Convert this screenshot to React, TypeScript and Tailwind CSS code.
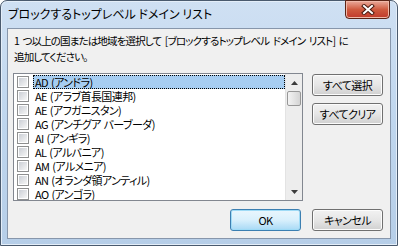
import React from 'react';

const items = [
	'AD (アンドラ)',
	'AE (アラブ首長国連邦)',
	'AE (アフガニスタン)',
	'AG (アンチグア バーブーダ)',
	'AI (アンギラ)',
	'AL (アルバニア)',
	'AM (アルメニア)',
	'AN (オランダ領アンティル)',
	'AO (アンゴラ)',
];

const font = "font-['Meiryo_UI','Noto_Sans_CJK_JP',sans-serif] [font-feature-settings:'palt']";

const Checkbox = () => (
	<div className="w-[12px] h-[12px] shrink-0 border border-[#8e8f8f] bg-white p-[1px]">
		<div className="w-full h-full bg-gradient-to-br from-[#cbcfd5] to-[#f6f6f6]" />
	</div>
);

const Button = ({ label, primary }: { label: string; primary?: boolean }) => (
	<button
		className={`w-[71px] h-[22px] rounded-[3px] border text-[11px] tracking-[-0.6px] text-black leading-none flex items-center justify-center ${
			primary
				? 'border-[#3c7fb1] bg-gradient-to-b from-[#eaf6fd] via-[#d9f0fc] to-[#a7d9f5] shadow-[inset_0_0_0_1px_#9fdbf6]'
				: 'border-[#707070] bg-gradient-to-b from-[#f2f2f2] via-[#e6e6e6] to-[#d0d0d0] shadow-[inset_0_0_0_1px_#fcfcfc]'
		}`}
	>
		{label}
	</button>
);

const App = () => {
	return (
		<div className={`w-[398px] h-[246px] bg-white overflow-hidden ${font}`}>
			<div className="w-full h-full flex flex-col rounded-t-[7px] border border-[#4a5a6e] bg-gradient-to-b from-[#cfe0f3] via-[#bfd6ee] to-[#b6cee8] px-[6px] pb-[6px] shadow-[inset_0_0_0_1px_#e4eef9]">
				<div className="h-[27px] flex items-start justify-between">
					<div className="pt-[5px] pl-[1px] text-[12px] leading-[16px] text-black whitespace-nowrap">
						ブロックするトップレベル ドメイン リスト
					</div>
					<div className="mt-[-1px] mr-[1px] w-[45px] h-[19px] rounded-b-[4px] border border-[#5c2416] bg-gradient-to-b from-[#e9a99a] via-[#cf5a3f] to-[#c0392b] flex items-center justify-center shadow-[inset_0_0_0_1px_#f0b8a8]">
						<svg width="14" height="11" viewBox="0 0 14 11">
							<path d="M3 2 L11 9 M11 2 L3 9" stroke="#4a1a10" strokeWidth="4" strokeLinecap="square" />
							<path d="M3 2 L11 9 M11 2 L3 9" stroke="#ffffff" strokeWidth="2" strokeLinecap="square" />
						</svg>
					</div>
				</div>
				<div className="flex-1 border border-[#8796ab] bg-[#f0f0f0] pl-[5px] pr-[7px] pt-[4px] pb-[7px] flex flex-col">
					<div className="pl-[1px] text-[10.5px] tracking-[-0.85px] [word-spacing:2px] leading-[16px] text-black whitespace-nowrap">
						<div>1 つ以上の国または地域を選択して [ブロックするトップレベル ドメイン リスト] に</div>
						<div>追加してください。</div>
					</div>
					<div className="mt-[8px] flex gap-[9px]">
						<div className="w-[290px] h-[128px] border border-[#828790] bg-white flex overflow-hidden">
							<div className="flex-1 pt-[1px] flex flex-col">
								{items.map((item, i) => (
									<div key={i} className="h-[14px] flex items-center pl-[3px] shrink-0">
										<Checkbox />
										<div
											className={`ml-[4px] flex-1 h-[14px] pl-[2px] text-[11px] tracking-[-0.6px] [word-spacing:1px] leading-[14px] text-black flex items-center whitespace-nowrap overflow-hidden ${
												i === 0 ? 'bg-[#a6cdf1] outline outline-1 outline-dotted outline-black -outline-offset-1' : ''
											}`}
										>
											{item}
										</div>
									</div>
								))}
							</div>
							<div className="w-[17px] h-full bg-[#ededed] border-l border-[#e3e3e3] flex flex-col items-center">
								<div className="h-[17px] flex items-center justify-center">
									<svg width="7" height="4" viewBox="0 0 7 4">
										<path d="M0 4 L3.5 0 L7 4 Z" fill="#3c3c3c" />
									</svg>
								</div>
								<div className="w-[14px] h-[15px] rounded-[2px] border border-[#979797] bg-gradient-to-r from-[#f3f3f3] via-[#e4e4e4] to-[#d4d4d4]" />
								<div className="flex-1" />
								<div className="h-[17px] flex items-center justify-center">
									<svg width="7" height="4" viewBox="0 0 7 4">
										<path d="M0 0 L7 0 L3.5 4 Z" fill="#3c3c3c" />
									</svg>
								</div>
							</div>
						</div>
						<div className="flex flex-col gap-[7px] pt-[1px]">
							<Button label="すべて選択" />
							<Button label="すべてクリア" />
						</div>
					</div>
					<div className="mt-[8px] flex justify-end gap-[11px]">
						<Button label="OK" primary />
						<Button label="キャンセル" />
					</div>
				</div>
			</div>
		</div>
	);
};

export default App;
